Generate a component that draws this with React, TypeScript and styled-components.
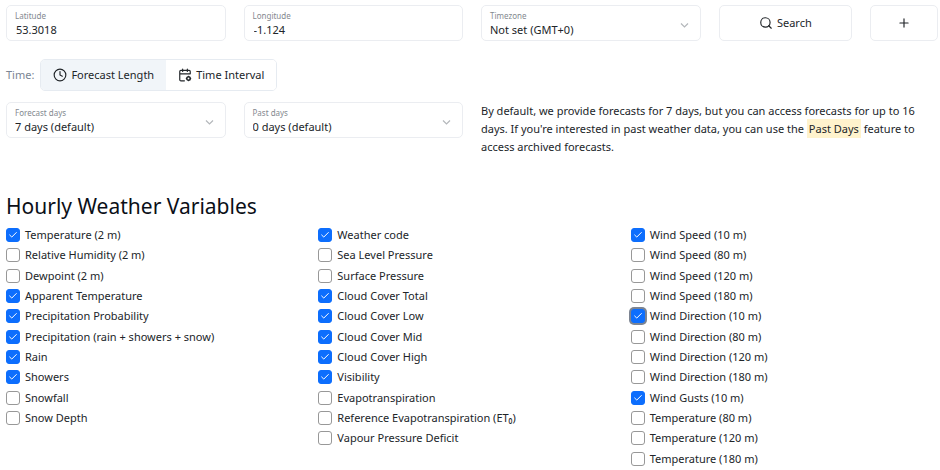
import React, { useState } from "react";
import styled, { createGlobalStyle } from "styled-components";
import { Check, Clock, Plus, Search } from "lucide-react";

const GlobalStyle = createGlobalStyle`
  *, *::before, *::after { box-sizing: border-box; }
  body {
    margin: 0;
    background: #fff;
    color: #212529;
    font-family: "Noto Sans", "Open Sans", sans-serif;
    font-size: 11px;
    line-height: 18px;
  }
  button, input, select { font: inherit; color: inherit; }
`;

const Page = styled.main`
  padding: 5px 2px 0 6px;
`;

const FieldRow = styled.div`
  display: grid;
  grid-template-columns: repeat(4, minmax(0, 1fr));
  gap: 18px;
`;

const FieldBox = styled.div`
  display: grid;
  grid-template-columns: minmax(0, 1fr) 24px;
  height: 36px;
  border: 1px solid #ebedf1;
  border-radius: 5px;
  background: #fff;
`;

const FieldLabel = styled.label`
  grid-area: 1 / 1;
  align-self: start;
  padding: 4px 8px 0;
  color: #84898f;
  font-size: 8px;
  line-height: 12px;
  pointer-events: none;
`;

const TextInput = styled.input`
  grid-area: 1 / 1 / 2 / 3;
  width: 100%;
  border: 0;
  padding: 14px 8px 0 9px;
  background: transparent;
  outline: 0;
`;

const SelectInput = styled.select`
  grid-area: 1 / 1 / 2 / 3;
  width: 100%;
  appearance: none;
  border: 0;
  padding: 14px 24px 0 8px;
  background: transparent;
  outline: 0;
`;

const ChevronIcon = styled.svg`
  grid-area: 1 / 2;
  align-self: center;
  width: 9px;
  height: 9px;
  margin-top: 4px;
  margin-left: 4px;
  fill: none;
  stroke: #b4b7bb;
  stroke-width: 1.2;
  pointer-events: none;
`;

const ActionGroup = styled.div`
  display: flex;
  gap: 18px;
`;

const ActionButton = styled.button<{ $grow: number }>`
  flex: ${(p) => p.$grow} 1 0;
  display: flex;
  align-items: center;
  justify-content: center;
  gap: 4px;
  padding: 0;
  border: 1px solid #ebedf1;
  border-radius: 5px;
  background: #fff;
`;

const TimeRow = styled.div`
  display: flex;
  align-items: center;
  gap: 6px;
  margin: 18px 0 11px;
`;

const TimeLabel = styled.span`
  color: #7b8594;
`;

const Tabs = styled.div`
  display: flex;
  border: 1px solid #e6ebf1;
  border-radius: 5px;
  overflow: hidden;
`;

const Tab = styled.button`
  display: flex;
  align-items: center;
  gap: 4px;
  height: 30px;
  padding: 0 12px;
  border: 0;
  background: #fff;

  &[aria-pressed="true"] {
    background: #f1f5f9;
  }
`;

const Note = styled.p`
  grid-column: span 2;
  margin: 0;
`;

const Highlight = styled.mark`
  padding: 2px;
  background: #fff3cd;
  color: inherit;
`;

const Title = styled.h2`
  margin: 36px 0 5px;
  color: #0b0f18;
  font-size: 21px;
  font-weight: 400;
  line-height: 28px;
`;

const VariableGrid = styled.div`
  display: grid;
  grid-template-columns: repeat(3, minmax(0, 1fr));
  gap: 18px;
  padding-right: 13px;
`;

const VariableList = styled.ul`
  display: grid;
  grid-template-rows: repeat(12, 1fr);
  min-height: 244px;
  margin: 0;
  padding: 0;
  list-style: none;
`;

const VariableItem = styled.li`
  display: flex;
  align-items: center;
  gap: 5px;
`;

const TickCell = styled.span`
  display: grid;
  place-items: center;
  color: #fff;

  > * { grid-area: 1 / 1; }
  > svg { pointer-events: none; }
`;

const TickBox = styled.input<{ $ring: boolean }>`
  appearance: none;
  width: 14px;
  height: 14px;
  margin: 0;
  border: 1px solid #989898;
  border-radius: 3px;
  background: #fff;
  box-shadow: ${(p) => (p.$ring ? "0 0 0 2px #7c8492" : "none")};

  &:checked {
    border-color: #0d6efd;
    background: #0d6efd;
  }
`;

function CalendarCogIcon() {
  return (
    <svg width="14" height="14" viewBox="0 0 24 24" fill="none" stroke="currentColor" strokeWidth="2" strokeLinecap="round" strokeLinejoin="round" aria-hidden="true">
      <path d="M8 2v4M16 2v4M3 10h18M21 10V6a2 2 0 0 0-2-2H5a2 2 0 0 0-2 2v14a2 2 0 0 0 2 2h6" />
      <circle cx="18" cy="18" r="3" strokeWidth="2.6" />
      <path d="M18 14v1M18 21v1M22 18h-1M15 18h-1" strokeWidth="1.4" />
    </svg>
  );
}

function TextField({ id, label, value }: { id: string; label: string; value: string }) {
  return (
    <FieldBox>
      <FieldLabel htmlFor={id}>{label}</FieldLabel>
      <TextInput id={id} type="text" defaultValue={value} />
    </FieldBox>
  );
}

function SelectField({ id, label, value }: { id: string; label: string; value: string }) {
  return (
    <FieldBox>
      <FieldLabel htmlFor={id}>{label}</FieldLabel>
      <SelectInput id={id} defaultValue={value}>
        <option value={value}>{value}</option>
      </SelectInput>
      <ChevronIcon viewBox="0 0 9 9" aria-hidden="true">
        <path d="M1 2.5 4.5 6 8 2.5" />
      </ChevronIcon>
    </FieldBox>
  );
}

const columns: string[][] = [
  [
    "Temperature (2 m)", "Relative Humidity (2 m)", "Dewpoint (2 m)", "Apparent Temperature",
    "Precipitation Probability", "Precipitation (rain + showers + snow)", "Rain", "Showers",
    "Snowfall", "Snow Depth",
  ],
  [
    "Weather code", "Sea Level Pressure", "Surface Pressure", "Cloud Cover Total",
    "Cloud Cover Low", "Cloud Cover Mid", "Cloud Cover High", "Visibility",
    "Evapotranspiration", "Reference Evapotranspiration (ET₀)", "Vapour Pressure Deficit",
  ],
  [
    "Wind Speed (10 m)", "Wind Speed (80 m)", "Wind Speed (120 m)", "Wind Speed (180 m)",
    "Wind Direction (10 m)", "Wind Direction (80 m)", "Wind Direction (120 m)",
    "Wind Direction (180 m)", "Wind Gusts (10 m)", "Temperature (80 m)",
    "Temperature (120 m)", "Temperature (180 m)",
  ],
];

const initialSelection = [
  "Temperature (2 m)", "Apparent Temperature", "Precipitation Probability",
  "Precipitation (rain + showers + snow)", "Rain", "Showers", "Weather code",
  "Cloud Cover Total", "Cloud Cover Low", "Cloud Cover Mid", "Cloud Cover High",
  "Visibility", "Wind Speed (10 m)", "Wind Direction (10 m)", "Wind Gusts (10 m)",
];

export default function App() {
  const [selected, setSelected] = useState(new Set(initialSelection));
  const [active, setActive] = useState("Wind Direction (10 m)");
  const [mode, setMode] = useState("length");

  const toggle = (name: string) => {
    const next = new Set(selected);
    if (!next.delete(name)) next.add(name);
    setSelected(next);
    setActive(name);
  };

  return (
    <>
      <GlobalStyle />
      <Page>
        <FieldRow>
          <TextField id="latitude" label="Latitude" value="53.3018" />
          <TextField id="longitude" label="Longitude" value="-1.124" />
          <SelectField id="timezone" label="Timezone" value="Not set (GMT+0)" />
          <ActionGroup>
            <ActionButton type="button" $grow={2}>
              <Search size={14} /> Search
            </ActionButton>
            <ActionButton type="button" $grow={1} aria-label="Add location">
              <Plus size={14} />
            </ActionButton>
          </ActionGroup>
        </FieldRow>

        <TimeRow>
          <TimeLabel>Time:</TimeLabel>
          <Tabs>
            <Tab type="button" aria-pressed={mode === "length"} onClick={() => setMode("length")}>
              <Clock size={14} /> Forecast Length
            </Tab>
            <Tab type="button" aria-pressed={mode === "interval"} onClick={() => setMode("interval")}>
              <CalendarCogIcon /> Time Interval
            </Tab>
          </Tabs>
        </TimeRow>

        <FieldRow>
          <SelectField id="forecast-days" label="Forecast days" value="7 days (default)" />
          <SelectField id="past-days" label="Past days" value="0 days (default)" />
          <Note>
            By default, we provide forecasts for 7 days, but you can access forecasts for up to 16
            days. If you're interested in past weather data, you can use the{" "}
            <Highlight>Past Days</Highlight> feature to access archived forecasts.
          </Note>
        </FieldRow>

        <Title>Hourly Weather Variables</Title>
        <VariableGrid>
          {columns.map((names, c) => (
            <VariableList key={c}>
              {names.map((name, r) => (
                <VariableItem key={name}>
                  <TickCell>
                    <TickBox
                      id={`var-${c}-${r}`}
                      type="checkbox"
                      checked={selected.has(name)}
                      onChange={() => toggle(name)}
                      $ring={active === name}
                    />
                    {selected.has(name) && <Check size={10} strokeWidth={2.4} />}
                  </TickCell>
                  <label htmlFor={`var-${c}-${r}`}>{name}</label>
                </VariableItem>
              ))}
            </VariableList>
          ))}
        </VariableGrid>
      </Page>
    </>
  );
}
